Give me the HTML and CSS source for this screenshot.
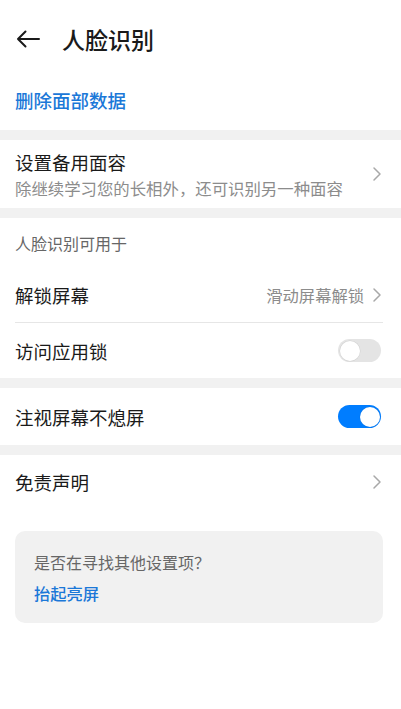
FILE: index.html
```html
<html lang="zh">

<head>
    <meta charset="UTF-8">
    <meta name="viewport" content="width=device-width, initial-scale=1.0">
    <title>人脸识别</title>
    <link rel="stylesheet" href="styles.css">
</head>

<body>
    <div class="topbar">
        <svg class="back" width="24" height="18" viewBox="0 0 24 18">
            <path d="M23 9H2M9.5 1.5L2 9l7.5 7.5" fill="none" stroke="#1a1a1a" stroke-width="2" stroke-linecap="round" stroke-linejoin="round"/>
        </svg>
        <span class="title">人脸识别</span>
    </div>

    <div class="link-row">删除面部数据</div>

    <div class="band"></div>

    <div class="row row-two">
        <div class="texts">
            <div class="label">设置备用面容</div>
            <div class="sub">除继续学习您的长相外，还可识别另一种面容</div>
        </div>
        <svg class="chev" width="10" height="16" viewBox="0 0 10 16">
            <path d="M2 2l6 6-6 6" fill="none" stroke="#a8a8a8" stroke-width="1.5" stroke-linecap="round" stroke-linejoin="round"/>
        </svg>
    </div>

    <div class="band"></div>

    <div class="group-title">人脸识别可用于</div>

    <div class="row row-a">
        <div class="label">解锁屏幕</div>
        <div class="right">
            <span class="value">滑动屏幕解锁</span>
            <svg class="chev" width="10" height="16" viewBox="0 0 10 16">
                <path d="M2 2l6 6-6 6" fill="none" stroke="#a8a8a8" stroke-width="1.5" stroke-linecap="round" stroke-linejoin="round"/>
            </svg>
        </div>
    </div>
    <div class="divider"></div>
    <div class="row row-b">
        <div class="label">访问应用锁</div>
        <div class="switch"><div class="knob"></div></div>
    </div>

    <div class="band"></div>

    <div class="row row-c">
        <div class="label">注视屏幕不熄屏</div>
        <div class="switch on"><div class="knob"></div></div>
    </div>

    <div class="band"></div>

    <div class="row row-d">
        <div class="label">免责声明</div>
        <svg class="chev" width="10" height="16" viewBox="0 0 10 16">
            <path d="M2 2l6 6-6 6" fill="none" stroke="#a8a8a8" stroke-width="1.5" stroke-linecap="round" stroke-linejoin="round"/>
        </svg>
    </div>

    <div class="card">
        <div class="card-q">是否在寻找其他设置项？</div>
        <div class="card-link">抬起亮屏</div>
    </div>
</body>

</html>
```

FILE: styles.css
```css
body {
    font-family: "Noto Sans CJK SC", "Noto Sans", sans-serif;
    margin: 0;
    background-color: #ffffff;
    color: #1a1a1a;
}

.topbar {
    display: flex;
    align-items: center;
    height: 62px;
    padding: 8px 0 0 16px;
}

.back {
    display: block;
}

.title {
    margin-left: 22px;
    font-size: 23px;
    font-weight: 500;
    line-height: 30px;
}

.link-row {
    display: flex;
    align-items: center;
    height: 60px;
    padding-left: 15px;
    font-size: 18.5px;
    font-weight: 500;
    color: #1b78d8;
}

.band {
    height: 10px;
    background-color: #f1f1f1;
}

.row {
    display: flex;
    align-items: center;
    justify-content: space-between;
    padding: 0 20px 0 15px;
}

.row-two {
    height: 68px;
}

.row-a {
    height: 54px;
}

.row-b {
    height: 55px;
}

.row-c {
    height: 57px;
}

.row-d {
    height: 54px;
}

.label {
    font-size: 18.5px;
    line-height: 24px;
}

.sub {
    margin-top: 3px;
    font-size: 16.4px;
    line-height: 22px;
    color: #8c8c8c;
}

.chev {
    display: block;
    margin-right: -1px;
}

.group-title {
    display: flex;
    align-items: center;
    height: 50px;
    padding-left: 15px;
    font-size: 16px;
    color: #666;
}

.right {
    display: flex;
    align-items: center;
    gap: 8px;
}

.value {
    font-size: 16.3px;
    color: #8c8c8c;
}

.divider {
    height: 1px;
    margin: 0 18px 0 15px;
    background-color: #e6e6e6;
}

.switch {
    position: relative;
    width: 43px;
    height: 23px;
    border-radius: 12px;
    background-color: #e4e4e4;
}

.knob {
    position: absolute;
    top: 1.5px;
    left: 1.5px;
    width: 20px;
    height: 20px;
    border-radius: 50%;
    background-color: #ffffff;
    box-shadow: 0 0 0 0.5px rgba(0, 0, 0, 0.08);
}

.switch.on {
    background-color: #007dff;
}

    .switch.on .knob {
        left: 21.5px;
    }

.card {
    margin: 22px 18px 0 15px;
    padding: 20px 19px 19px 19px;
    border-radius: 10px;
    background-color: #f1f1f1;
}

.card-q {
    font-size: 16px;
    line-height: 22px;
    color: #666;
}

.card-link {
    margin-top: 9px;
    font-size: 16.3px;
    line-height: 22px;
    font-weight: 500;
    color: #1b78d8;
}
```
